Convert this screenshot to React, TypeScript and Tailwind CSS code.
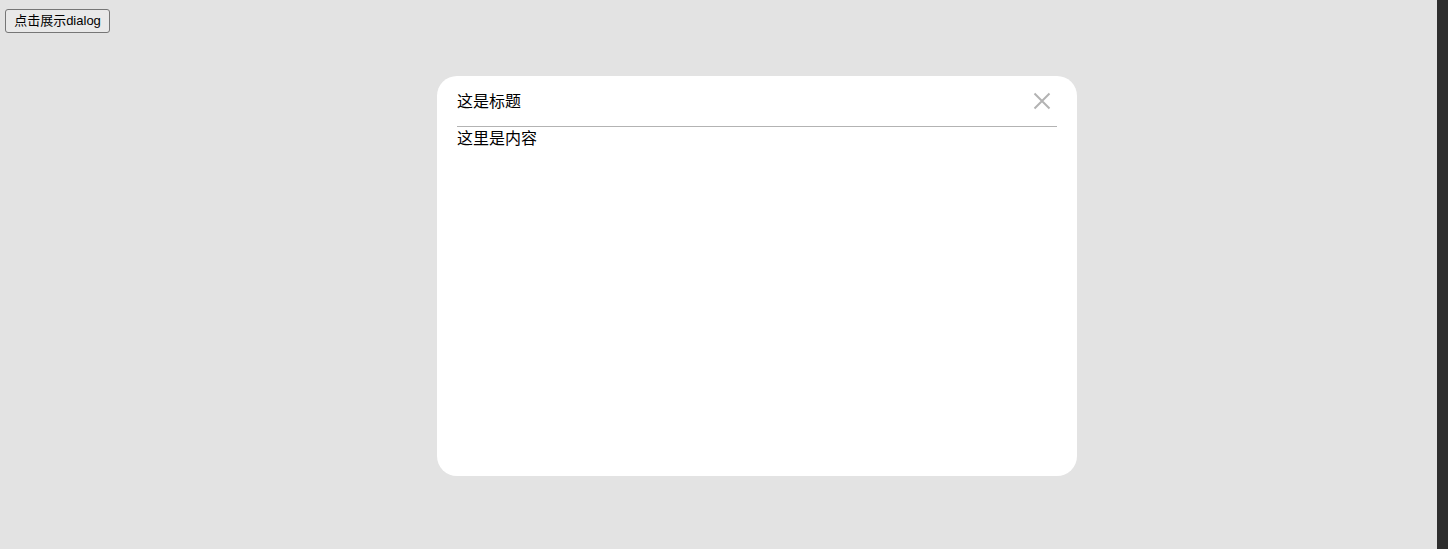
import React from "react";

export default function App() {
  return (
    <div
      className="flex h-[549px] w-[1448px] overflow-hidden bg-[#e3e3e3]"
      style={{ fontFamily: '"Liberation Sans", "Noto Sans CJK SC", sans-serif' }}
    >
      <div className="flex flex-1 flex-col">
        <div className="flex pl-[5px] pt-[9px]">
          <button className="h-[24px] w-[105px] rounded-[3px] border border-[#767676] bg-[#e9e9e9] text-[13px] leading-[22px] text-black">
            点击展示dialog
          </button>
        </div>
        <div className="flex justify-center pt-[43px] pl-[77px]">
          <div className="flex h-[400px] w-[640px] flex-col rounded-[20px] bg-white px-[20px]">
            <div className="flex h-[51px] items-center justify-between border-b border-[#b3b3b3]">
              <span className="mt-[2px] text-[16px] leading-[24px] text-black">这是标题</span>
              <svg width="18" height="18" viewBox="0 0 18 18" className="mr-[6px]">
                <path d="M1.5 1.5 L16.5 16.5 M16.5 1.5 L1.5 16.5" stroke="#b3b3b3" strokeWidth="2" fill="none" />
              </svg>
            </div>
            <div className="text-[16px] leading-[24px] text-black">这里是内容</div>
          </div>
        </div>
      </div>
      <div className="h-full w-[11px] bg-[#2e2e2e]" />
    </div>
  );
}
